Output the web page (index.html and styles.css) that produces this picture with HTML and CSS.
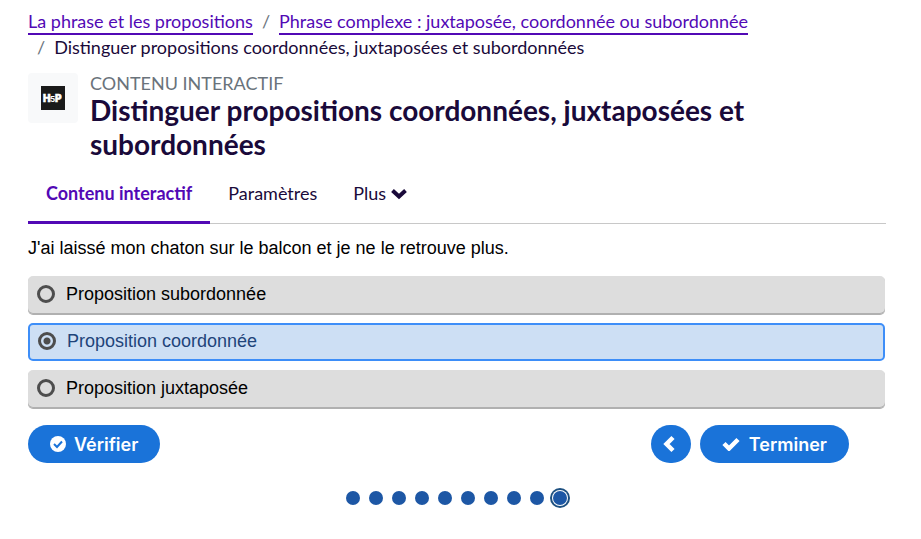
FILE: index.html
```
<!DOCTYPE html>
<html lang="fr">
<head>
    <meta charset="UTF-8">
    <meta name="viewport" content="width=device-width, initial-scale=1.0">
    <title>Distinguer propositions coordonnées, juxtaposées et subordonnées</title>
    <link rel="stylesheet" href="styles.css">
</head>
<body>
    <nav aria-label="Fil d'Ariane">
        <ol class="breadcrumb">
            <li><a href="#">La phrase et les propositions</a></li>
            <li><a href="#">Phrase complexe : juxtaposée, coordonnée ou subordonnée</a></li>
            <li>Distinguer propositions coordonnées, juxtaposées et subordonnées</li>
        </ol>
    </nav>

    <header class="page-header">
        <div class="activity-icon">
            <svg width="24" height="24" viewBox="0 0 24 24">
                <rect width="24" height="24" fill="#1a1a1a"/>
                <text class="logo-text" x="2" y="16">H</text>
                <text class="logo-text logo-five" x="9" y="16">5</text>
                <text class="logo-text" x="14" y="16">P</text>
            </svg>
        </div>
        <div>
            <div class="activity-type">Contenu interactif</div>
            <h1>Distinguer propositions coordonnées, juxtaposées et subordonnées</h1>
        </div>
    </header>

    <nav class="tabs">
        <a class="tab active" href="#">Contenu interactif</a>
        <a class="tab" href="#">Paramètres</a>
        <a class="tab" href="#">Plus
            <svg width="16" height="12" viewBox="0 0 16 12"><path d="M1.5 2.5 L8 8.5 L14.5 2.5" fill="none" stroke="currentColor" stroke-width="4"/></svg>
        </a>
    </nav>

    <!-- Question -->
    <form>
        <fieldset class="question">
            <legend>J'ai laissé mon chaton sur le balcon et je ne le retrouve plus.</legend>
            <label class="answer"><input type="radio" name="answer">Proposition subordonnée</label>
            <label class="answer"><input type="radio" name="answer" checked>Proposition coordonnée</label>
            <label class="answer"><input type="radio" name="answer">Proposition juxtaposée</label>
        </fieldset>

        <div class="buttons">
            <button type="button" class="check">
                <svg width="16" height="16" viewBox="0 0 16 16"><circle cx="8" cy="8" r="8" fill="#fff"/><path d="M4 8 L7 11 L12 5.5" fill="none" stroke="#1a73d9" stroke-width="2"/></svg>
                Vérifier
            </button>
            <button type="button" class="prev" aria-label="Question précédente">
                <svg width="16" height="18" viewBox="0 0 16 18"><path d="M10 2.5 L3.5 9 L10 15.5" fill="none" stroke="#fff" stroke-width="4.5"/></svg>
            </button>
            <button type="button" class="finish">
                <svg width="18" height="14" viewBox="0 0 18 14"><path d="M2 6.5 L7 11.5 L16 2.5" fill="none" stroke="#fff" stroke-width="4.5"/></svg>
                Terminer
            </button>
        </div>
    </form>

    <!-- Progress -->
    <nav class="dots" aria-label="Progression">
        <a href="#" aria-label="Question 1"></a>
        <a href="#" aria-label="Question 2"></a>
        <a href="#" aria-label="Question 3"></a>
        <a href="#" aria-label="Question 4"></a>
        <a href="#" aria-label="Question 5"></a>
        <a href="#" aria-label="Question 6"></a>
        <a href="#" aria-label="Question 7"></a>
        <a href="#" aria-label="Question 8"></a>
        <a href="#" aria-label="Question 9"></a>
        <a href="#" class="current" aria-label="Question 10"></a>
    </nav>
</body>
</html>
```
FILE: styles.css
```
* {
    box-sizing: border-box;
}
body {
    margin: 0;
    padding: 8px 35px 24px 28px;
    background-color: #fff;
    color: #1a0a3a;
    font-family: Lato, sans-serif;
    font-size: 18px;
    line-height: 26px;
}
.breadcrumb {
    display: flex;
    flex-wrap: wrap;
    margin: 0;
    padding: 0;
    list-style: none;
}
.breadcrumb li + li::before {
    content: "/";
    padding: 0 9px;
    color: #6c757d;
}
.breadcrumb a {
    padding-bottom: 1px;
    color: #5209b5;
    text-decoration: none;
    box-shadow: 0 2px 0 #5209b5;
}
.page-header {
    display: flex;
    gap: 12px;
    margin-top: 13px;
}
.activity-icon {
    display: flex;
    flex: none;
    align-items: center;
    justify-content: center;
    width: 50px;
    height: 50px;
    border-radius: 4px;
    background-color: #f8f9fa;
}
.logo-text {
    fill: #fff;
    stroke: #fff;
    stroke-width: 0.5px;
    font-family: Inter, sans-serif;
    font-size: 10px;
    font-weight: 900;
}
.logo-five {
    stroke: none;
    font-size: 8px;
    font-weight: 700;
}
.activity-type {
    color: #6a737b;
    line-height: 20px;
    text-transform: uppercase;
}
h1 {
    margin: 0;
    font-size: 28px;
    font-weight: 700;
    line-height: 34px;
}
.tabs {
    display: flex;
    margin-top: 11px;
    border-bottom: 1px solid #c8c8c8;
}
.tab {
    margin-bottom: -1px;
    padding: 8px 18px 15px;
    border-bottom: 3px solid transparent;
    color: #1a0a3a;
    text-decoration: none;
}
.tab.active {
    border-bottom-color: #5209b5;
    color: #5209b5;
    font-weight: 700;
}
form {
    margin-top: 11px;
}
.question {
    display: flex;
    flex-direction: column;
    gap: 9px;
    margin: 0 1px 0 0;
    padding: 0;
    border: none;
    color: #000;
    font-family: "Liberation Sans", Arial, sans-serif;
}
.question legend {
    margin-bottom: 15px;
    padding: 0;
}
.answer {
    display: flex;
    align-items: center;
    gap: 11px;
    height: 38px;
    padding: 0 9px 2px;
    border-radius: 5px;
    background-color: #ddd;
    box-shadow: inset 0 -1px 0 #b0b0b0, 0 1px 0 #b0b0b0;
}
.answer:has(:checked) {
    padding: 0 8px 2px;
    border: 2px solid #3d8ef8;
    background-color: #cddff4;
    box-shadow: none;
    color: #1f447a;
}
.answer input {
    width: 18px;
    height: 18px;
    margin: 0;
    border: 3px solid #4d4d4d;
    border-radius: 50%;
    appearance: none;
}
.answer input:checked {
    background: radial-gradient(circle, #4d4d4d 3px, transparent 4px);
}
.buttons {
    display: flex;
    gap: 9px;
    margin: 17px 37px 0 0;
}
button {
    display: flex;
    align-items: center;
    justify-content: center;
    gap: 9px;
    height: 38px;
    padding: 0 22px;
    border: none;
    border-radius: 19px;
    background-color: #1a73d9;
    color: #fff;
    font-family: Inter, sans-serif;
    font-size: 18px;
    font-weight: 600;
    cursor: pointer;
}
.check {
    gap: 8px;
}
.prev {
    width: 40px;
    margin-left: auto;
    padding: 0;
}
.dots {
    display: flex;
    justify-content: center;
    gap: 9px;
    margin: 28px 2px 0 0;
}
.dots a {
    width: 14px;
    height: 14px;
    border-radius: 50%;
    background-color: #1d57a5;
}
.dots .current {
    box-shadow: 0 0 0 1px #fff, 0 0 0 3px #1d5080;
}
```
